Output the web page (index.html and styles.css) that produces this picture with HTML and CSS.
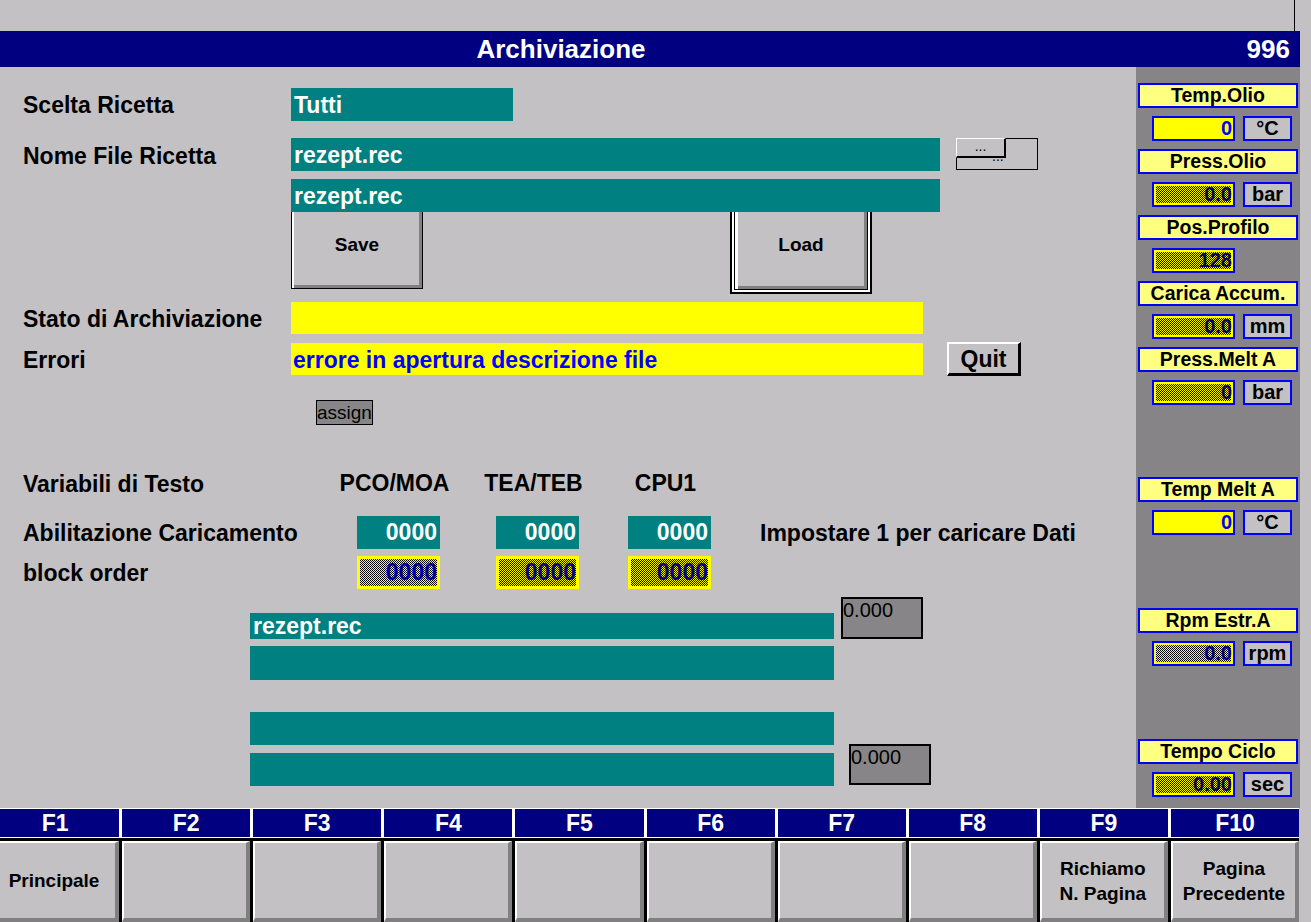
FILE: index.html
```html
<!DOCTYPE html>
<html lang="it">
<head>
<meta charset="utf-8">
<title>Archiviazione</title>
<link rel="stylesheet" href="styles.css">
</head>
<body>
<div class="topstrip"><span class="tick"></span></div>
<div class="titlebar">
  <div class="title">Archiviazione</div>
  <div class="pagenum">996</div>
</div>
<div class="content">
  <main class="form">
    <div class="row r-scelta">
      <div class="lbl">Scelta Ricetta</div>
      <div class="fld teal w-tutti">Tutti</div>
    </div>
    <div class="row r-nome">
      <div class="lbl">Nome File Ricetta</div>
      <div class="fld teal w-file">rezept.rec</div>
      <div class="browse">
        <div class="browse-btn">...</div>
        <span class="browse-ghost">...</span>
      </div>
    </div>
    <div class="row r-file2">
      <div class="lbl"></div>
      <div class="fld teal w-file">rezept.rec</div>
    </div>
    <div class="row r-btns">
      <div class="lbl"></div>
      <div class="btn-save">Save</div>
      <div class="btn-load"><div class="btn-load-in">Load</div></div>
    </div>
    <div class="row r-stato">
      <div class="lbl">Stato di Archiviazione</div>
      <div class="fld yellow w-msg"></div>
    </div>
    <div class="row r-err">
      <div class="lbl">Errori</div>
      <div class="fld yellow w-msg">errore in apertura descrizione file</div>
      <div class="btn-quit">Quit</div>
    </div>
    <div class="row r-assign">
      <div class="assign">assign</div>
    </div>

    <div class="vars">
      <div class="vlbl hdrlbl">Variabili di Testo</div>
      <div class="c hdr">PCO/MOA</div>
      <div class="c hdr">TEA/TEB</div>
      <div class="c hdr">CPU1</div>
      <div></div>

      <div class="vlbl">Abilitazione Caricamento</div>
      <div class="c num teal">0000</div>
      <div class="c num teal">0000</div>
      <div class="c num teal">0000</div>
      <div class="note">Impostare 1 per caricare Dati</div>

      <div class="vlbl">block order</div>
      <div class="c num hatch">0000</div>
      <div class="c num hatch">0000</div>
      <div class="c num hatch">0000</div>
      <div></div>
    </div>

    <div class="grp grp1">
      <div class="col">
        <div class="fld teal bar-a">rezept.rec</div>
        <div class="fld teal bar-b"></div>
      </div>
      <div class="gbox gbox1">0.000</div>
    </div>
    <div class="grp grp2">
      <div class="col">
        <div class="fld teal bar-c"></div>
        <div class="fld teal bar-d"></div>
      </div>
      <div class="gbox gbox2">0.000</div>
    </div>
  </main>

  <aside class="side">
    <div class="blk">
      <div class="slbl">Temp.Olio</div>
      <div class="svals"><div class="sval solid">0</div><div class="sunit">°C</div></div>
    </div>
    <div class="blk">
      <div class="slbl">Press.Olio</div>
      <div class="svals"><div class="sval hat">0.0</div><div class="sunit">bar</div></div>
    </div>
    <div class="blk">
      <div class="slbl">Pos.Profilo</div>
      <div class="svals"><div class="sval hat">128</div></div>
    </div>
    <div class="blk">
      <div class="slbl">Carica Accum.</div>
      <div class="svals"><div class="sval hat">0.0</div><div class="sunit">mm</div></div>
    </div>
    <div class="blk">
      <div class="slbl">Press.Melt A</div>
      <div class="svals"><div class="sval hat">0</div><div class="sunit">bar</div></div>
    </div>
    <div class="blk skip1">
      <div class="slbl">Temp Melt A</div>
      <div class="svals"><div class="sval solid">0</div><div class="sunit">°C</div></div>
    </div>
    <div class="blk skip">
      <div class="slbl">Rpm Estr.A</div>
      <div class="svals"><div class="sval hat">0.0</div><div class="sunit">rpm</div></div>
    </div>
    <div class="blk skip">
      <div class="slbl">Tempo Ciclo</div>
      <div class="svals"><div class="sval hat">0.00</div><div class="sunit">sec</div></div>
    </div>
  </aside>
</div>

<footer class="fkeys">
  <div class="fhead">
    <div>F1</div><div>F2</div><div>F3</div><div>F4</div><div>F5</div>
    <div>F6</div><div>F7</div><div>F8</div><div>F9</div><div>F10</div>
  </div>
  <div class="fbody">
    <div class="fbtn">Principale</div>
    <div class="fbtn"></div>
    <div class="fbtn"></div>
    <div class="fbtn"></div>
    <div class="fbtn"></div>
    <div class="fbtn"></div>
    <div class="fbtn"></div>
    <div class="fbtn"></div>
    <div class="fbtn">Richiamo<br>N. Pagina</div>
    <div class="fbtn">Pagina<br>Precedente</div>
  </div>
</footer>
</body>
</html>
```

FILE: styles.css
```css
* { box-sizing: border-box; }
html, body { margin: 0; padding: 0; }
body {
  width: 1311px;
  height: 922px;
  overflow: hidden;
  background: #c3c1c4;
  font-family: "Liberation Sans", Arial, sans-serif;
  font-weight: bold;
  color: #000;
}

/* top */
.topstrip { height: 31px; display: flex; justify-content: flex-end; }
.tick { width: 1px; background: #000; margin-right: 16px; }

.titlebar {
  width: 1300px;
  height: 36px;
  background: #000080;
  color: #fff;
  display: grid;
  grid-template-columns: 1122px 1fr;
  font-size: 26px;
  line-height: 36px;
}
.title { text-align: center; }
.pagenum { text-align: right; padding-right: 10px; }

/* content */
.content { display: flex; height: 741px; }
.form { width: 1136px; flex: none; padding-left: 23px; font-size: 23px; }

.row { display: flex; align-items: center; }
.lbl { width: 268px; flex: none; white-space: nowrap; padding-top: 2px; }

.fld {
  height: 33px;
  line-height: 33px;
  padding-left: 3px;
  padding-top: 1px;
  white-space: nowrap;
  overflow: hidden;
  flex: none;
}
.teal { background: #008080; color: #fff; }
.yellow { background: #ffff00; color: #0000ff; }

.w-tutti { width: 222px; }
.w-file { width: 649px; }
.w-msg { width: 632px; height: 32px; line-height: 32px; padding-left: 2px; }

.r-scelta { margin-top: 21px; height: 33px; }
.r-nome { margin-top: 17px; height: 33px; align-items: flex-start; }
.r-nome .lbl { line-height: 33px; }
.r-file2 { margin-top: 8px; height: 33px; }

/* browse "..." */
.browse {
  position: relative;
  margin-left: 16px;
  width: 82px;
  height: 32px;
  border: 1px solid #000;
  font: normal 14px/14px "Liberation Sans", Arial, sans-serif;
}
.browse-btn {
  margin: -1px 0 0 -1px;
  width: 50px;
  height: 20px;
  border-top: 1px solid #fff;
  border-left: 1px solid #fff;
  border-right: 2px solid #000;
  border-bottom: 2px solid #000;
  background: #c3c1c4;
  text-align: center;
  line-height: 14px;
}
.browse-ghost { position: absolute; left: 35px; top: 10px; }

/* Save / Load */
.r-btns { height: 90px; align-items: flex-start; }
.btn-save {
  width: 132px;
  height: 77px;
  border: 1px solid #000;
  border-top: 0;
  background: #c3c1c4;
  box-shadow: inset 2px 0 0 #fff, inset -3px -3px 0 #808080;
  display: flex;
  align-items: center;
  justify-content: center;
  padding-bottom: 11px;
  font-size: 19px;
}
.btn-load {
  margin-left: 307px;
  width: 142px;
  height: 82px;
  border: 2px solid #000;
  border-top: 0;
  background: #fff;
  padding: 0 2px 2px 2px;
}
.btn-load-in {
  height: 100%;
  border: 1px solid #000;
  border-top: 0;
  background: #c3c1c4;
  box-shadow: inset 3px 0 0 #fff, inset -3px -3px 0 #808080;
  display: flex;
  align-items: center;
  justify-content: center;
  padding-bottom: 12px;
  font-size: 19px;
}

.r-stato { height: 32px; }
.r-err { margin-top: 9px; height: 32px; }
.btn-quit {
  align-self: flex-start;
  margin-top: -1px;
  margin-left: 24px;
  width: 74px;
  height: 34px;
  border-top: 2px solid #fff;
  border-left: 2px solid #fff;
  border-right: 3px solid #000;
  border-bottom: 3px solid #000;
  background: #c3c1c4;
  display: flex;
  align-items: center;
  justify-content: center;
  padding-top: 2px;
  font-size: 23px;
}

.r-assign { margin-top: 25px; }
.assign {
  margin-left: 293px;
  width: 57px;
  height: 25px;
  border: 1px solid #000;
  background: #878587;
  font: normal 19px/23px "Liberation Sans", Arial, sans-serif;
  overflow: hidden;
  white-space: nowrap;
}

/* variables grid */
.vars {
  margin-top: 41px;
  display: grid;
  grid-template-columns: 334px 83px 139px 132px 1fr;
  grid-template-rows: 43px 33px 33px;
  row-gap: 7px;
  align-items: center;
}
.vlbl { white-space: nowrap; padding-top: 1px; }
.hdrlbl { align-self: start; line-height: 34px; }
.vars > .c { justify-self: end; width: 83px; }
.hdr {
  align-self: start;
  height: 34px;
  line-height: 34px;
  display: flex;
  justify-content: center;
  white-space: nowrap;
  margin-right: 4px;
}
.num { height: 33px; line-height: 33px; text-align: right; padding-right: 3px; }
.hatch {
  background: repeating-conic-gradient(#000 0% 25%, #ffff00 0% 50%) 0 0 / 2px 2px;
  border: 3px solid #ffff00;
  color: #0000a0;
  line-height: 27px;
  padding-right: 0;
}
.note { padding-left: 49px; white-space: nowrap; padding-top: 1px; }

/* lower group */
.grp { display: flex; margin-left: 227px; align-items: flex-start; }
.grp1 { margin-top: 8px; }
.grp2 { margin-top: 32px; }
.col { width: 584px; flex: none; display: flex; flex-direction: column; }
.grp1 .col { padding-top: 16px; }
.col .fld { width: 584px; padding-top: 0; }
.bar-a { height: 26px; line-height: 26px; }
.bar-b { height: 34px; margin-top: 7px; }
.bar-c { height: 33px; }
.bar-d { height: 33px; margin-top: 8px; }
.gbox {
  width: 82px;
  border: 2px solid #000;
  background: #878587;
  font: normal 20px/22px "Liberation Sans", Arial, sans-serif;
  flex: none;
}
.gbox1 { margin-left: 7px; height: 42px; }
.gbox2 { margin-left: 15px; margin-top: 32px; height: 41px; }

/* sidebar */
.side {
  width: 164px;
  flex: none;
  background: #868487;
  padding-top: 16px;
  padding-left: 2px;
}
.blk + .blk { margin-top: 8px; }
.blk.skip1 { margin-top: 72px; }
.blk.skip { margin-top: 73px; }
.slbl {
  width: 160px;
  height: 25px;
  border: 2px solid #0000ff;
  background: #ffff80;
  text-align: center;
  font-size: 19.5px;
  line-height: 21px;
  white-space: nowrap;
}
.svals { display: flex; margin-top: 8px; margin-left: 14px; }
.sval {
  width: 83px;
  height: 25px;
  border: 2px solid #0000ff;
  text-align: right;
  font-size: 20px;
  line-height: 21px;
  padding-right: 1px;
}
.sval.solid { background: #ffff00; color: #0000ff; }
.sval.hat {
  background: repeating-conic-gradient(#000 0% 25%, #ffff00 0% 50%) 0 0 / 2px 2px;
  box-shadow: inset 0 0 0 2px #ffff00;
  color: #000080;
}
.sunit {
  margin-left: 8px;
  width: 49px;
  height: 25px;
  border: 2px solid #0000ff;
  background: #c3c1c4;
  text-align: center;
  font-size: 20px;
  line-height: 21px;
}

/* function keys */
.fkeys {
  margin-left: -9px;
  width: 1308px;
  background: #fff;
  padding-top: 1px;
}
.fhead {
  display: grid;
  grid-template-columns: repeat(10, 1fr);
  column-gap: 3px;
}
.fhead div {
  background: #000080;
  color: #fff;
  height: 28px;
  line-height: 28px;
  text-align: center;
  font-size: 23px;
}
.fbody {
  margin-top: 1px;
  height: 84px;
  background: #000;
  padding-top: 3px;
  display: grid;
  grid-template-columns: repeat(10, 1fr);
  column-gap: 3px;
}
.fbtn {
  background: #c3c1c4;
  border-top: 2px solid #fff;
  border-left: 2px solid #fff;
  border-right: 4px solid #808080;
  border-bottom: 4px solid #808080;
  display: flex;
  align-items: center;
  justify-content: center;
  text-align: center;
  font-size: 19px;
  line-height: 25px;
}
```
